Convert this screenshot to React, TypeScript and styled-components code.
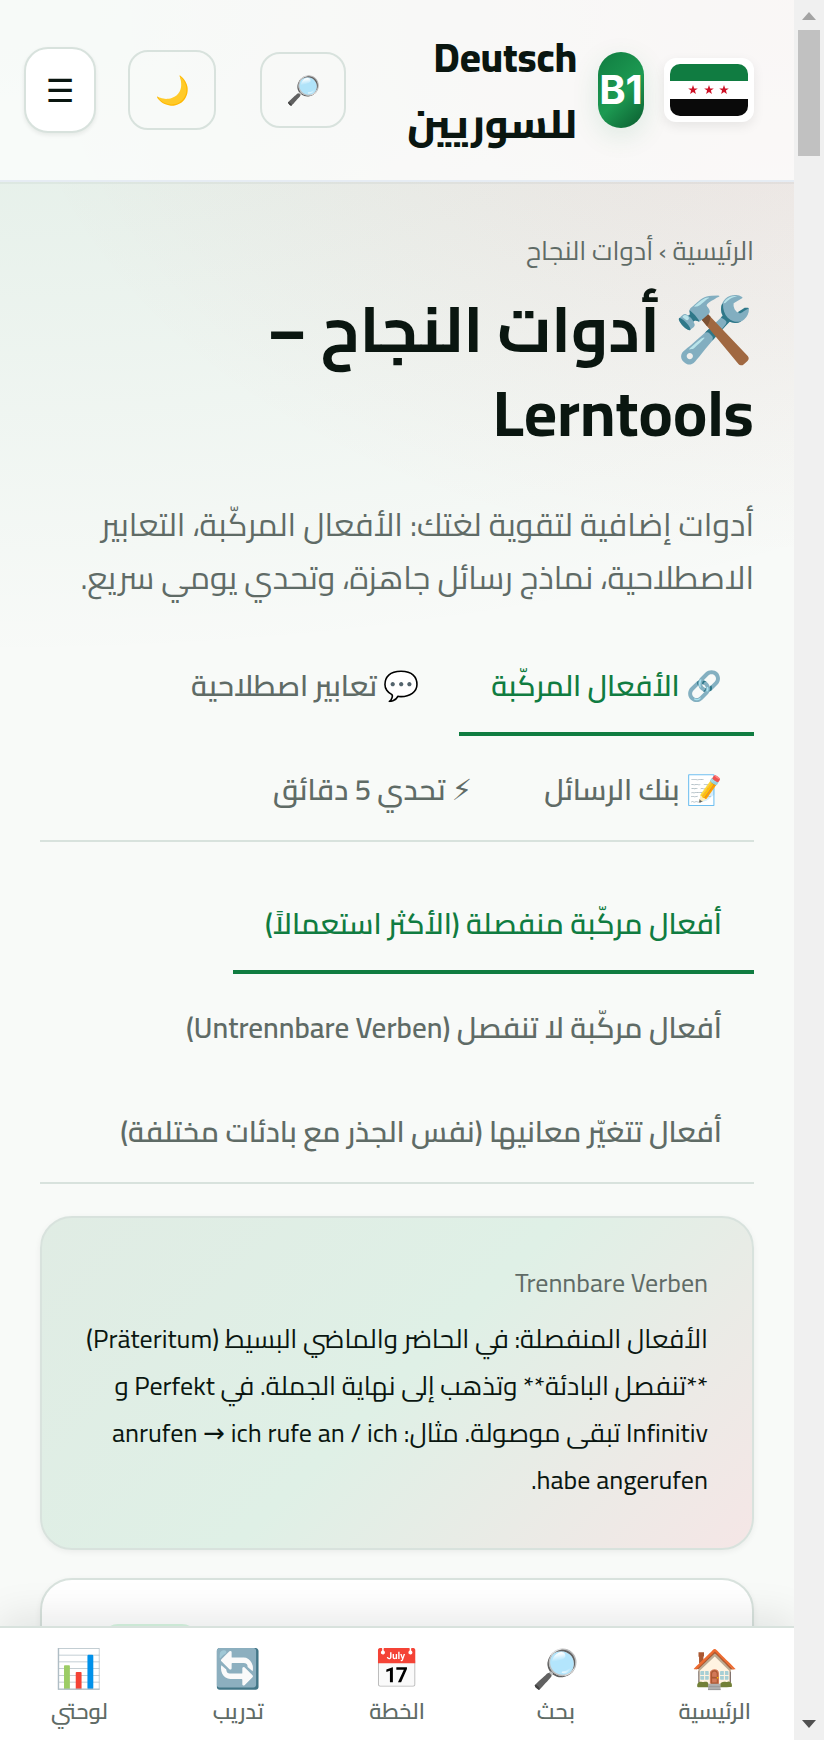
import React from "react";
import styled, { createGlobalStyle } from "styled-components";

const arabic = `Cairo, "Open Sans", "Noto Sans", "DejaVu Sans", sans-serif`;

const ink = "#0a1610";
const muted = "#5f6b66";
const green = "#107c41";
const line = "#d8e2dd";

const GlobalStyle = createGlobalStyle`
  *, *::before, *::after { box-sizing: border-box; }
  body { margin: 0; overflow: hidden; background: #f8faf8; }
  button { font: inherit; color: inherit; cursor: pointer; }
  h1, p { margin: 0; }
`;

const Window = styled.div`
  display: flex;
  height: 100vh;
  font-family: ${arabic};
  color: ${ink};
`;

const Page = styled.div`
  flex: 1;
  min-width: 0;
  overflow: hidden;
  display: flex;
  flex-direction: column;
  background:
    radial-gradient(ellipse 800px 560px at 100% 0%, rgba(206, 17, 38, 0.085), transparent 100%),
    radial-gradient(ellipse 1500px 660px at 0% 0%, rgba(16, 124, 65, 0.1), transparent 100%),
    #f8faf8;
`;

const Header = styled.header`
  flex: none;
  display: flex;
  align-items: center;
  justify-content: space-between;
  height: 182px;
  padding: 0 40px 0 24px;
  background: rgba(255, 255, 255, 0.72);
  border-bottom: 2px solid #e6ecf3;
  box-shadow: 0 2px 0 rgba(10, 22, 16, 0.04);
`;

const Brand = styled.a`
  display: flex;
  align-items: center;
  color: inherit;
  text-decoration: none;
`;

const Flag = styled.span`
  flex: none;
  display: flex;
  width: 90px;
  padding: 6px;
  margin-left: 20px;
  background: #fff;
  border-radius: 12px;
  box-shadow: 0 4px 12px rgba(0, 0, 0, 0.08);

  svg {
    display: block;
    width: 100%;
    border-radius: 10px;
  }
`;

const Level = styled.span`
  flex: none;
  display: flex;
  align-items: center;
  justify-content: center;
  width: 46px;
  height: 76px;
  margin-left: 21px;
  border-radius: 24px;
  background: linear-gradient(135deg, #107c41, #1d9a52 55%, #0a5a2e);
  box-shadow: 0 8px 28px rgba(16, 124, 65, 0.12);
  color: #fff;
  font: 700 40px/48px Inter, sans-serif;
`;

const BrandName = styled.span`
  width: 180px;
  padding-top: 2px;
  font-size: 40px;
  font-weight: 800;
  line-height: 66px;
`;

const Actions = styled.div`
  display: flex;
  align-items: center;
`;

const IconButton = styled.button<{ $w: number; $h: number; $gap: number; $solid?: boolean }>`
  width: ${(p) => p.$w}px;
  height: ${(p) => p.$h}px;
  margin-right: ${(p) => p.$gap}px;
  padding: 0;
  font-size: ${(p) => (p.$solid ? 32 : 28)}px;
  line-height: 40px;
  background: ${(p) => (p.$solid ? "#fff" : "transparent")};
  border: 2px solid ${line};
  border-radius: ${(p) => (p.$solid ? 24 : 20)}px;
  box-shadow: ${(p) => (p.$solid ? "0 2px 4px rgba(10, 22, 16, 0.08)" : "none")};
`;

const Main = styled.main`
  flex: 1;
  min-height: 0;
  overflow: hidden;
  padding: 46px 40px 0;
`;

const Breadcrumb = styled.nav`
  font-size: 26px;
  line-height: 46px;
  color: ${muted};

  a { color: inherit; text-decoration: none; }
`;

const Title = styled.h1`
  margin-top: 13px;
  font-size: 64px;
  font-weight: 700;
  line-height: 84px;
`;

const Lead = styled.p`
  margin-top: 43px;
  font-size: 32px;
  line-height: 53px;
  color: ${muted};
`;

const Tabs = styled.div`
  display: flex;
  flex-wrap: wrap;
  column-gap: 8px;
  margin-top: 28px;
  border-bottom: 2px solid ${line};
`;

const Tab = styled.button`
  height: 104px;
  padding: 8px 32px 0;
  background: none;
  border: 0;
  border-bottom: 4px solid transparent;
  font-size: 29px;
  font-weight: 600;
  line-height: 48px;
  color: ${muted};
  white-space: nowrap;

  &[aria-selected="true"] {
    color: ${green};
    border-bottom-color: ${green};
  }
`;

const Card = styled.section<{ $tinted?: boolean }>`
  min-height: 334px;
  margin-top: ${(p) => (p.$tinted ? 32 : 28)}px;
  padding: ${(p) => (p.$tinted ? 42 : 44)}px 44px;
  border: 2px solid ${line};
  border-radius: 32px;
  box-shadow: 0 2px 6px rgba(10, 22, 16, 0.06);
  background: ${(p) =>
    p.$tinted ? "linear-gradient(135deg, #e0ece4, #dff0e6 50%, #f5e6e6)" : "#fff"};
`;

const CardLabel = styled.div`
  font-size: 26px;
  line-height: 46px;
  color: ${muted};
`;

const CardText = styled.p`
  margin-top: 9px;
  font-size: 26px;
  line-height: 47px;
`;

const Badge = styled.span`
  display: block;
  width: 96px;
  height: 40px;
  margin: 0 auto 0 16px;
  border-radius: 16px;
  background: #d9f7e3;
`;

const BottomNav = styled.nav`
  flex: none;
  position: relative;
  display: grid;
  grid-template-columns: repeat(5, 1fr);
  height: 114px;
  background: #fff;
  border-top: 2px solid ${line};
  box-shadow: 0 -8px 40px rgba(10, 22, 16, 0.1);
`;

const NavItem = styled.a`
  display: flex;
  flex-direction: column;
  align-items: center;
  padding-top: 18px;
  font-size: 22px;
  font-weight: 600;
  line-height: 38px;
  color: ${muted};
  text-decoration: none;
`;

const NavIcon = styled.span`
  font-family: "Noto Color Emoji", sans-serif;
  font-size: 38px;
  line-height: 46px;
`;

const ScrollRail = styled.div`
  flex: none;
  display: flex;
  flex-direction: column;
  align-items: center;
  width: 30px;
  background: #f0f0f0;
`;

const ScrollThumb = styled.div`
  width: 22px;
  height: 126px;
  background: #c1c1c1;
`;

const ScrollArrow = styled.svg`
  flex: none;
  width: 30px;
  height: 30px;

  &:last-child { margin-top: auto; }
`;

const star = "M0-5 1.2-1.6 4.8-1.5 1.9.6 2.9 4 0 2-2.9 4-1.9.6-4.8-1.5-1.2-1.6Z";

const mainTabs = ["🔗 الأفعال المركّبة", "💬 تعابير اصطلاحية", "📝 بنك الرسائل", "⚡︎ تحدي 5 دقائق"];
const verbTabs = [
  "أفعال مركّبة منفصلة (الأكثر استعمالاً)",
  "أفعال مركّبة لا تنفصل (Untrennbare Verben)",
  "أفعال تتغيّر معانيها (نفس الجذر مع بادئات مختلفة)",
];
const navItems = [
  ["🏠", "الرئيسية"],
  ["🔎", "بحث"],
  ["📅", "الخطة"],
  ["🔄", "تدريب"],
  ["📊", "لوحتي"],
];

function TabList({ label, items }: { label: string; items: string[] }) {
  const [active, setActive] = React.useState(0);
  return (
    <Tabs role="tablist" aria-label={label}>
      {items.map((text, i) => (
        <Tab key={text} role="tab" aria-selected={i === active} onClick={() => setActive(i)}>
          {text}
        </Tab>
      ))}
    </Tabs>
  );
}

export default function App() {
  return (
    <Window>
      <GlobalStyle />
      <Page dir="rtl" lang="ar">
        <Header>
          <Brand href="#">
            <Flag>
              <svg viewBox="0 0 78 52" aria-hidden="true">
                <path fill="#107c41" d="M0 0h78v17H0z" />
                <path fill="#fff" d="M0 17h78v18H0z" />
                <path fill="#0a0a0a" d="M0 35h78v17H0z" />
                {[23, 39, 54].map((x) => (
                  <path key={x} fill="#ce1126" d={star} transform={`translate(${x} 26)`} />
                ))}
              </svg>
            </Flag>
            <Level dir="ltr">B1</Level>
            <BrandName>Deutsch للسوريين</BrandName>
          </Brand>
          <Actions>
            <IconButton $w={86} $h={76} $gap={0} aria-label="بحث">🔎</IconButton>
            <IconButton $w={88} $h={80} $gap={44} aria-label="الوضع الليلي">🌙</IconButton>
            <IconButton $w={72} $h={86} $gap={32} $solid aria-label="القائمة">☰</IconButton>
          </Actions>
        </Header>
        <Main>
          <Breadcrumb>
            <a href="#">الرئيسية</a> › أدوات النجاح
          </Breadcrumb>
          <Title>🛠️ أدوات النجاح – Lerntools</Title>
          <Lead>
            أدوات إضافية لتقوية لغتك: الأفعال المركّبة، التعابير الاصطلاحية، نماذج رسائل جاهزة، وتحدي يومي سريع.
          </Lead>
          <TabList label="الأدوات" items={mainTabs} />
          <TabList label="الأفعال" items={verbTabs} />
          <Card $tinted>
            <CardLabel>Trennbare Verben</CardLabel>
            <CardText>
              الأفعال المنفصلة: في الحاضر والماضي البسيط (Präteritum) **تنفصل البادئة** وتذهب إلى نهاية الجملة. في Perfekt و
              Infinitiv تبقى موصولة. مثال: anrufen → ich rufe an / ich habe angerufen.
            </CardText>
          </Card>
          <Card>
            <Badge />
          </Card>
        </Main>
        <BottomNav>
          {navItems.map(([icon, label]) => (
            <NavItem key={label} href="#">
              <NavIcon aria-hidden="true">{icon}</NavIcon>
              {label}
            </NavItem>
          ))}
        </BottomNav>
      </Page>
      <ScrollRail aria-hidden="true">
        <ScrollArrow viewBox="0 0 30 30"><path fill="#a3a3a3" d="M8 20h14l-7-8z" /></ScrollArrow>
        <ScrollThumb />
        <ScrollArrow viewBox="0 0 30 30"><path fill="#505050" d="M8 10h14l-7 8z" /></ScrollArrow>
      </ScrollRail>
    </Window>
  );
}
